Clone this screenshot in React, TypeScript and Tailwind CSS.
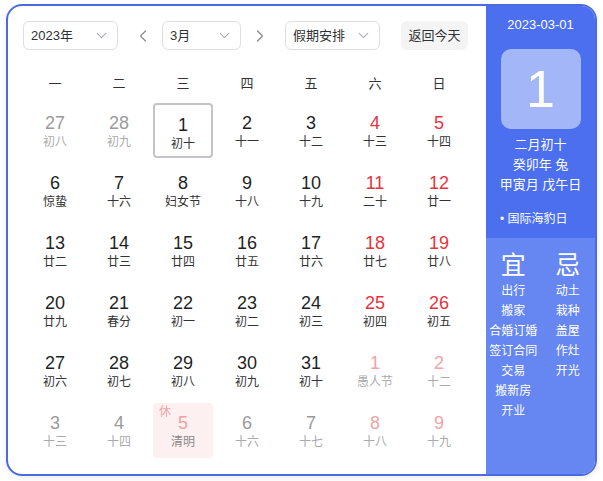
import { ChevronDown, ChevronLeft, ChevronRight } from 'lucide-react';

type Day = {
  num: number;
  lunar: string;
  other?: boolean;
  weekend?: boolean;
  selected?: boolean;
  rest?: boolean;
};

const weekdays = ['一', '二', '三', '四', '五', '六', '日'];

const rows: Day[][] = [
  [
    { num: 27, lunar: '初八', other: true },
    { num: 28, lunar: '初九', other: true },
    { num: 1, lunar: '初十', selected: true },
    { num: 2, lunar: '十一' },
    { num: 3, lunar: '十二' },
    { num: 4, lunar: '十三', weekend: true },
    { num: 5, lunar: '十四', weekend: true },
  ],
  [
    { num: 6, lunar: '惊蛰' },
    { num: 7, lunar: '十六' },
    { num: 8, lunar: '妇女节' },
    { num: 9, lunar: '十八' },
    { num: 10, lunar: '十九' },
    { num: 11, lunar: '二十', weekend: true },
    { num: 12, lunar: '廿一', weekend: true },
  ],
  [
    { num: 13, lunar: '廿二' },
    { num: 14, lunar: '廿三' },
    { num: 15, lunar: '廿四' },
    { num: 16, lunar: '廿五' },
    { num: 17, lunar: '廿六' },
    { num: 18, lunar: '廿七', weekend: true },
    { num: 19, lunar: '廿八', weekend: true },
  ],
  [
    { num: 20, lunar: '廿九' },
    { num: 21, lunar: '春分' },
    { num: 22, lunar: '初一' },
    { num: 23, lunar: '初二' },
    { num: 24, lunar: '初三' },
    { num: 25, lunar: '初四', weekend: true },
    { num: 26, lunar: '初五', weekend: true },
  ],
  [
    { num: 27, lunar: '初六' },
    { num: 28, lunar: '初七' },
    { num: 29, lunar: '初八' },
    { num: 30, lunar: '初九' },
    { num: 31, lunar: '初十' },
    { num: 1, lunar: '愚人节', other: true, weekend: true },
    { num: 2, lunar: '十二', other: true, weekend: true },
  ],
  [
    { num: 3, lunar: '十三', other: true },
    { num: 4, lunar: '十四', other: true },
    { num: 5, lunar: '清明', other: true, rest: true },
    { num: 6, lunar: '十六', other: true },
    { num: 7, lunar: '十七', other: true },
    { num: 8, lunar: '十八', other: true, weekend: true },
    { num: 9, lunar: '十九', other: true, weekend: true },
  ],
];

const good = ['出行', '搬家', '合婚订婚', '签订合同', '交易', '搬新房', '开业'];
const bad = ['动土', '栽种', '盖屋', '作灶', '开光'];

function Select({ label, width }: { label: string; width: string }) {
  return (
    <div
      className={`${width} h-[29px] flex items-center justify-between pl-[7px] pr-[7px] border border-[#dcdfe6] rounded-[6px] text-[13px] text-[#303133]`}
    >
      <span>{label}</span>
      <ChevronDown className="w-[17px] h-[17px] text-[#a8abb2]" strokeWidth={1.5} />
    </div>
  );
}

function Cell({ d }: { d: Day }) {
  let numColor = 'text-[#1f1f1f]';
  let lunarColor = 'text-[#333333]';
  if (d.weekend) numColor = 'text-[#e8333c]';
  if (d.other) {
    numColor = d.weekend ? 'text-[#f2a3a6]' : 'text-[#9a9a9a]';
    lunarColor = 'text-[#ababab]';
  }
  if (d.rest) numColor = 'text-[#f0a0a4]';
  if (d.rest) lunarColor = 'text-[#8a8a8a]';

  return (
    <div
      className={`relative h-[55px] flex flex-col items-center pt-[10px] rounded-[4px] ${
        d.selected ? 'border-2 border-[#c3c5ca] pt-[8px]' : ''
      } ${d.rest ? 'bg-[#fdf0f1]' : ''}`}
    >
      {d.rest && (
        <span className="absolute left-[6px] top-[1px] text-[12px] leading-[16px] text-[#f3a4a8]">休</span>
      )}
      <span className={`text-[18px] leading-[20px] ${numColor}`}>{d.num}</span>
      <span className={`text-[12px] leading-[16px] mt-[1px] ${lunarColor}`}>{d.lunar}</span>
    </div>
  );
}

export default function App() {
  return (
    <div
      className="w-[603px] h-[481px] bg-white pt-[4px] pl-[6px]"
      style={{ fontFamily: '"Liberation Sans", "Noto Sans CJK SC", sans-serif' }}
    >
      <div className="w-[591px] h-[472px] border-2 border-[#4a6ce0] rounded-[16px] overflow-hidden flex shadow-[0_2px_6px_rgba(0,0,0,0.08)]">
        {/* 左侧月历 */}
        <div className="w-[478px] px-[15px] pt-[15px]">
          <div className="flex items-center">
            <Select label="2023年" width="w-[95px]" />
            <button className="ml-[13px] w-[24px] h-[29px] flex items-center justify-center text-[#8c8c8c]">
              <ChevronLeft className="w-[20px] h-[20px]" strokeWidth={1.5} />
            </button>
            <div className="ml-[7px]">
              <Select label="3月" width="w-[79px]" />
            </div>
            <button className="ml-[7px] w-[24px] h-[29px] flex items-center justify-center text-[#8c8c8c]">
              <ChevronRight className="w-[20px] h-[20px]" strokeWidth={1.5} />
            </button>
            <div className="ml-[13px]">
              <Select label="假期安排" width="w-[95px]" />
            </div>
            <button className="ml-[21px] w-[67px] h-[29px] rounded-[6px] bg-[#f4f4f5] text-[13px] text-[#303133]">
              返回今天
            </button>
          </div>

          <div className="mx-[2px] mt-[22px] h-[24px] grid grid-cols-7 gap-x-[4px] items-center">
            {weekdays.map((w) => (
              <div key={w} className="text-center text-[13px] text-[#333]">
                {w}
              </div>
            ))}
          </div>

          <div className="mx-[2px] mt-[7px] grid grid-cols-7 gap-x-[4px] gap-y-[5px]">
            {rows.flat().map((d, i) => (
              <Cell key={i} d={d} />
            ))}
          </div>
        </div>

        {/* 右侧当日信息 */}
        <div className="w-[109px] flex flex-col text-white">
          <div className="h-[232px] bg-[#4c6ff0] flex flex-col items-center pt-[10px]">
            <div className="text-[13px] leading-[18px]">2023-03-01</div>
            <div className="mt-[15px] w-[80px] h-[80px] rounded-[10px] bg-[#a3b6f7] flex items-center justify-center text-[52px] leading-none">
              1
            </div>
            <div className="mt-[6px] text-[13px] leading-[20px] text-center">
              <div>二月初十</div>
              <div>癸卯年 兔</div>
              <div>甲寅月 戊午日</div>
            </div>
            <div className="self-start ml-[14px] mt-[16px] text-[12px] leading-[16px]">• 国际海豹日</div>
          </div>
          <div className="flex-1 bg-[#6686f2] grid grid-cols-2 content-start pt-[13px]">
            <div className="flex flex-col items-center">
              <div className="text-[25px] leading-[28px]">宜</div>
              <div className="mt-[2px] text-[12px] leading-[20px] text-center">
                {good.map((g) => (
                  <div key={g}>{g}</div>
                ))}
              </div>
            </div>
            <div className="flex flex-col items-center">
              <div className="text-[25px] leading-[28px]">忌</div>
              <div className="mt-[2px] text-[12px] leading-[20px] text-center">
                {bad.map((b) => (
                  <div key={b}>{b}</div>
                ))}
              </div>
            </div>
          </div>
        </div>
      </div>
    </div>
  );
}
